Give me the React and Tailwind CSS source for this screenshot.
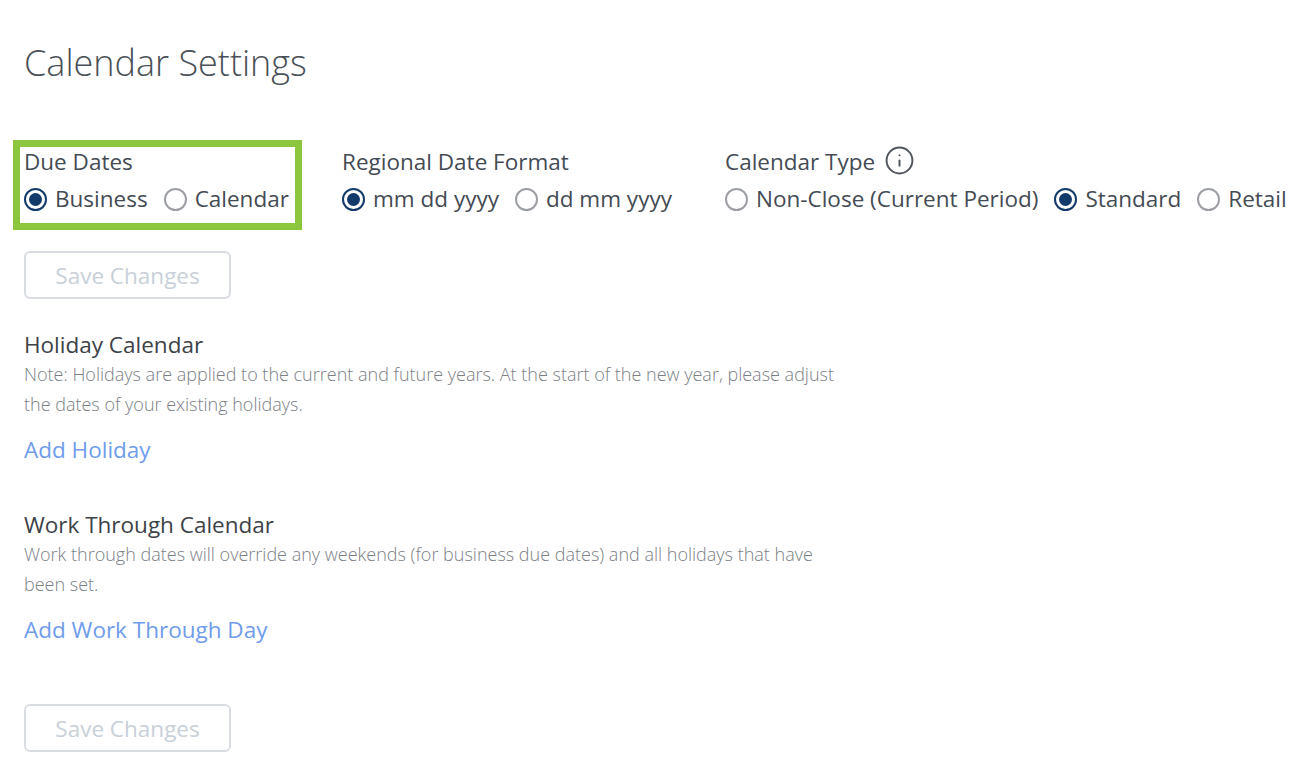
import { Info } from "lucide-react";

function Radio({ label, checked }) {
  return (
    <label className="flex items-center gap-[8px]">
      {checked ? (
        <span className="flex h-[23px] w-[23px] items-center justify-center rounded-full border-2 border-[#123a6b]">
          <span className="h-[13px] w-[13px] rounded-full bg-[#123a6b]"></span>
        </span>
      ) : (
        <span className="h-[23px] w-[23px] rounded-full border-2 border-[#9b9ea3]"></span>
      )}
      <span>{label}</span>
    </label>
  );
}

function SaveButton() {
  return (
    <button className="flex h-[48px] w-[207px] items-center justify-center rounded-[6px] border-2 border-[#d9dde2] pt-[2px] text-[22.5px] text-[#c8d0d9]">
      Save Changes
    </button>
  );
}

export default function App() {
  return (
    <div className="min-h-[784px] bg-white pl-6 font-['Open_Sans',sans-serif] text-[22.5px] leading-[28px] text-[#444b54]">
      <h1 className="pt-[38px] text-[36px] leading-[50px] font-light text-[#4a5057]">Calendar Settings</h1>

      <div className="mt-[60px] flex">
        <div className="relative w-[318px]">
          <p className="h-[37px]">Due Dates</p>
          <div className="flex gap-[16px]">
            <Radio label="Business" checked />
            <Radio label="Calendar" />
          </div>
          <div className="absolute top-[-8px] left-[-11px] h-[90px] w-[289px] border-[7px] border-[#8cc63f]"></div>
        </div>
        <div className="w-[383px]">
          <p className="h-[37px]">Regional Date Format</p>
          <div className="flex gap-[16px]">
            <Radio label="mm dd yyyy" checked />
            <Radio label="dd mm yyyy" />
          </div>
        </div>
        <div>
          <p className="flex h-[37px] items-start gap-[9px]">
            Calendar Type
            <Info className="mt-[-3px] h-[31px] w-[31px] text-[#50565d]" strokeWidth={1.5} />
          </p>
          <div className="flex gap-[16px]">
            <Radio label="Non-Close (Current Period)" />
            <Radio label="Standard" checked />
            <Radio label="Retail" />
          </div>
        </div>
      </div>

      <div className="mt-[38px]">
        <SaveButton />
      </div>

      <section className="mt-[32px] w-[830px]">
        <h2 className="text-[#3c4248]">Holiday Calendar</h2>
        <p className="text-[18px] leading-[30px] font-light text-[#7b8086]">
          Note: Holidays are applied to the current and future years. At the start of the new year, please adjust the dates of your existing holidays.
        </p>
        <a className="mt-[17px] block text-[#6f9ceb]">Add Holiday</a>
      </section>

      <section className="mt-[47px] w-[830px]">
        <h2 className="text-[#3c4248]">Work Through Calendar</h2>
        <p className="text-[18px] leading-[30px] font-light text-[#7b8086]">
          Work through dates will override any weekends (for business due dates) and all holidays that have been set.
        </p>
        <a className="mt-[17px] block text-[#6f9ceb]">Add Work Through Day</a>
      </section>

      <div className="mt-[60px]">
        <SaveButton />
      </div>
    </div>
  );
}
